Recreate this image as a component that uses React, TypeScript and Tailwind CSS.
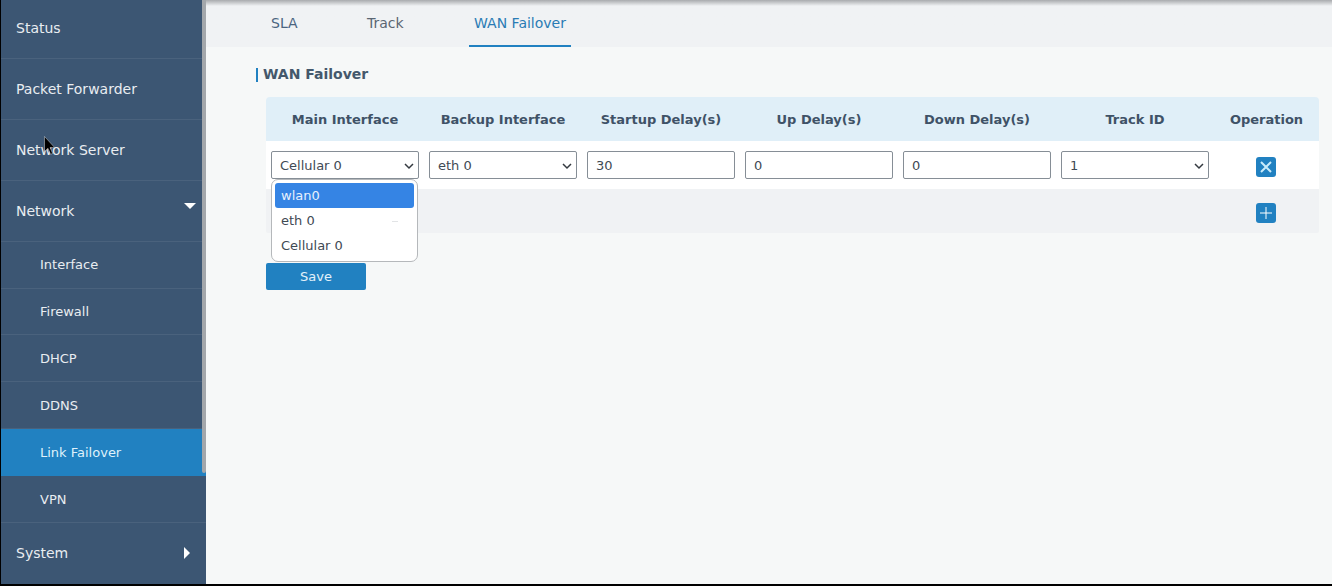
import React from 'react';

const font = "font-['DejaVu_Sans',sans-serif]";

const topItems = ['Status', 'Packet Forwarder', 'Network Server'];
const subItems = ['Interface', 'Firewall', 'DHCP', 'DDNS', 'Link Failover', 'VPN'];
const columns = ['Main Interface', 'Backup Interface', 'Startup Delay(s)', 'Up Delay(s)', 'Down Delay(s)', 'Track ID'];

const SelectBox = ({ value }: { value: string }) => (
  <div className="flex h-[28px] w-[148px] items-center justify-between rounded-[2px] border border-[#868e96] bg-white pl-[8px] pr-[3px] pt-[1px] text-[13px] text-[#3f4a54]">
    <span>{value}</span>
    <svg width="12" height="12" viewBox="0 0 12 12" fill="none" stroke="#343a40" strokeWidth="1.5">
      <path d="M2 4l4 4 4-4" />
    </svg>
  </div>
);

const TextBox = ({ value }: { value: string }) => (
  <div className="flex h-[28px] w-[148px] items-center rounded-[2px] border border-[#868e96] bg-white pl-[8px] pt-[1px] text-[13px] text-[#3f4a54]">
    {value}
  </div>
);

const Sidebar = () => (
  <aside className="relative flex h-[584px] w-[205px] shrink-0 flex-col bg-[#3c5673] text-[#e9edf1]">
    {topItems.map((item, i) => (
      <div key={item} className={`flex items-center border-b border-[#4a627d] pl-[15px] text-[14px] ${i === 0 ? 'h-[59px] pb-[1px]' : 'h-[61px] pt-[1px]'}`}>
        {item}
      </div>
    ))}
    <div className="relative flex h-[61px] items-center border-b border-[#4a627d] pl-[15px] pt-[1px] text-[14px]">
      Network
      <div className="absolute left-[183px] top-[22px] h-0 w-0 border-x-[6px] border-t-[6px] border-x-transparent border-t-white" />
    </div>
    {subItems.map((item) => (
      <div
        key={item}
        className={`flex h-[47px] items-center pl-[39px] text-[13px] ${
          item === 'Link Failover' ? 'bg-[#2181c1] text-[#dff1fb]' : 'border-b border-[#4a627d]'
        } ${item === 'VPN' ? 'pt-[1px]' : ''}`}
      >
        {item}
      </div>
    ))}
    <div className="relative flex h-[61px] items-center pl-[15px] text-[14px]">
      System
      <div className="absolute left-[183px] top-[24px] h-0 w-0 border-y-[6px] border-l-[6px] border-y-transparent border-l-white" />
    </div>
    <div className="absolute left-[201px] top-0 h-[473px] w-[4px] rounded-b-[2px] bg-[#a3a7ab]" />
  </aside>
);

const App = () => (
  <div className={`${font} relative h-[586px] w-[1332px] overflow-hidden bg-black`}>
    <div className="flex h-[584px] pl-[1px]">
      <Sidebar />
      <main className="flex min-w-0 flex-1 flex-col bg-[#f6f8f8]">
        <div className="flex h-[47px] items-end bg-[#f0f2f4] bg-gradient-to-b from-[#a9abae] from-0% via-[#f0f2f4] via-[6px] to-[#f0f2f4] pl-[53px] text-[14px]">
          <div className="flex h-[47px] w-[96px] items-center pb-[1px] pl-[12px] text-[#4b6580]">SLA</div>
          <div className="flex h-[47px] w-[114px] items-center pb-[1px] pl-[12px] text-[#5a6672]">Track</div>
          <div className="flex h-[47px] w-[102px] items-center justify-center border-b-2 border-[#2181c1] pt-[1px] text-[#2a7cb5]">WAN Failover</div>
        </div>
        <div className="pl-[50px] pt-[21px]">
          <div className="flex h-[14px] items-center border-l-2 border-[#2181c1] pb-[2px] pl-[5px] text-[14px] font-bold text-[#44586c]">
            WAN Failover
          </div>
          <div className="ml-[10px] mt-[15px] w-[1053px]">
            <div className="flex h-[44px] items-center rounded-t-[4px] bg-[#e0eff8] pt-[1px] text-[13px] font-bold text-[#3f5267]">
              {columns.map((c) => (
                <div key={c} className="w-[158px] text-center">{c}</div>
              ))}
              <div className="flex-1 text-center">Operation</div>
            </div>
            <div className="flex h-[48px] items-start bg-white pt-[10px]">
              <div className="w-[158px] pl-[5px]"><SelectBox value="Cellular 0" /></div>
              <div className="w-[158px] pl-[5px]"><SelectBox value="eth 0" /></div>
              <div className="w-[158px] pl-[5px]"><TextBox value="30" /></div>
              <div className="w-[158px] pl-[5px]"><TextBox value="0" /></div>
              <div className="w-[158px] pl-[5px]"><TextBox value="0" /></div>
              <div className="w-[158px] pl-[5px]"><SelectBox value="1" /></div>
              <div className="flex flex-1 justify-center pr-[1px] pt-[6px]">
                <div className="flex h-[20px] w-[20px] items-center justify-center rounded-[3px] bg-[#2181c1]">
                  <svg width="14" height="14" viewBox="0 0 14 14" stroke="#c9ebfb" strokeWidth="2" fill="none">
                    <path d="M2 2l10 10M12 2L2 12" />
                  </svg>
                </div>
              </div>
            </div>
            <div className="flex h-[44px] items-start justify-end rounded-b-[2px] bg-[#f0f2f4] pr-[43px] pt-[14px]">
              <div className="flex h-[20px] w-[20px] items-center justify-center rounded-[3px] bg-[#2181c1]">
                <svg width="14" height="14" viewBox="0 0 14 14" stroke="#ffffff" strokeWidth="1" fill="none">
                  <path d="M7 1v12M1 7h12" />
                </svg>
              </div>
            </div>
            <div className="mt-[30px] flex h-[27px] w-[100px] items-center justify-center rounded-[2px] bg-[#2181c1] text-[13px] text-[#e3f1fa]">
              Save
            </div>
          </div>
        </div>
      </main>
    </div>

    {/* open native select list */}
    <div className="absolute left-[271px] top-[179px] flex h-[83px] w-[147px] flex-col rounded-[7px] border border-[#b5b8bb] bg-white p-[3px] text-[13px] text-[#3f4a54]">
      <div className="flex h-[25px] items-center rounded-[3px] bg-[#3584e4] pl-[6px] text-[#e8f1fc]">wlan0</div>
      <div className="relative flex h-[25px] items-center pl-[6px]">
        eth 0
        <span className="absolute left-[117px] top-[13px] h-[1px] w-[6px] bg-[#e2e4e6]" />
      </div>
      <div className="flex h-[25px] items-center pl-[6px]">Cellular 0</div>
    </div>

    {/* mouse pointer */}
    <svg className="absolute left-[44px] top-[136px]" width="12" height="20" viewBox="0 0 12 20">
      <path d="M0.5 0.5v15l3.5-3.2 2.6 6 2-.9-2.5-5.8h4.6z" fill="#000" stroke="#fff" strokeWidth="0.4" />
    </svg>
  </div>
);

export default App;
